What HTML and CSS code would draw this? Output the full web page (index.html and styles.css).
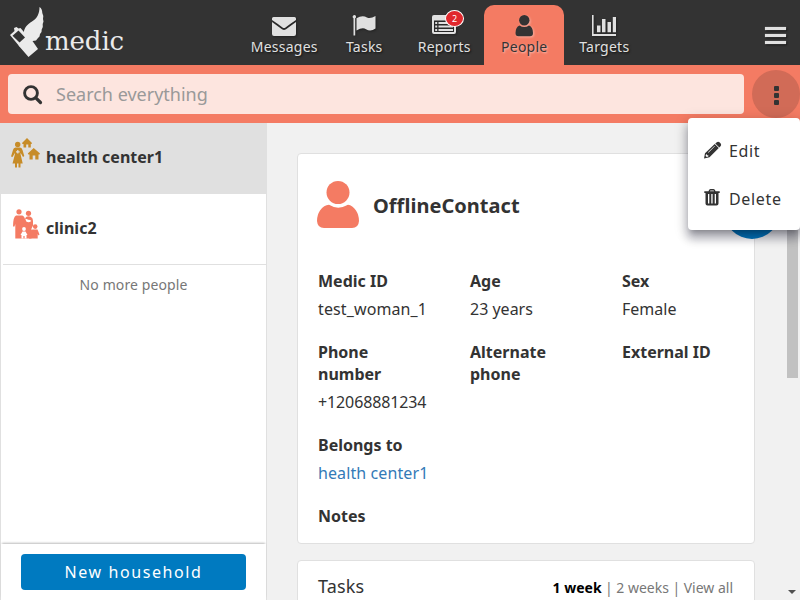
FILE: index.html
```html
<!DOCTYPE html>
<html lang="en">
<head>
<meta charset="utf-8">
<title>Medic</title>
<link rel="stylesheet" href="styles.css">
</head>
<body>
<div class="app">
  <header class="header">
    <div class="logo">
      <svg class="logo-mark" width="34" height="52" viewBox="0 0 34 52" aria-hidden="true">
        <path fill="#ebebeb" d="M29.500 0C31.500 1 32.300 3.500 32.300 6L33.300 9L33 12L33.500 14.500L32.700 17L32.800 20L31.700 22.500L31.500 25L30 27L29.500 29.500L28 31L26 33.500L22.500 34L28 42L18.500 50L8.500 38.500L16 31L13.700 26C14 21 17.500 17 22 14.500C27 11.500 29.500 7 29.500 0Z"/>
        <path fill="#ebebeb" d="M0 28L4.500 24L4 21L6.500 20L8.500 21.500L10.500 21L19 31L9.500 39.500Z"/>
        <path fill="#333" d="M2.500 28.700L8.500 23.500L15 30.500L9.500 35.500Z"/>
      </svg>
      <span class="logo-text">medic</span>
    </div>
    <nav class="tabs">
      <a class="tab">
        <svg width="24" height="24" viewBox="0 0 24 24"><path d="M1.500 2H22.500Q24 2 24 3.500V5Q18 9 13.500 12.400Q12 13.500 10.500 12.400Q6 9 0 5V3.500Q0 2 1.500 2ZM0 7L10 14.200Q12 15.800 14 14.200L24 7V19Q24 21 22 21H2Q0 21 0 19Z"/></svg>
        <span>Messages</span>
      </a>
      <a class="tab">
        <svg width="24" height="24" viewBox="0 0 24 24"><path d="M2.300 0A1.800 1.800 0 0 1 3.200 3.300V20.500H1.500V3.300A1.800 1.800 0 0 1 2.300 0ZM4.500 3.200Q10.500-.5 15 2.500Q18.500 4 23.500 1V13.500Q18.500 17 14 14.200Q10.500 12 4.500 15.500Z"/></svg>
        <span>Tasks</span>
      </a>
      <a class="tab">
        <svg width="24" height="24" viewBox="0 0 24 24"><path fill-rule="evenodd" d="M2 0H22Q24 0 24 2V17Q24 19 22 19H2Q0 19 0 17V2Q0 0 2 0ZM2 5.500V17H22V5.500ZM3.200 7H5.200V9H3.200ZM6.500 7H21V9H6.500ZM3.200 10.500H5.200V12.500H3.200ZM6.500 10.500H21V12.500H6.500ZM3.200 14H5.200V16H3.200ZM6.500 14H21V16H6.500Z"/></svg>
        <span>Reports</span>
        <b class="badge">2</b>
      </a>
      <a class="tab tab-active">
        <svg width="24" height="24" viewBox="0 0 24 24"><circle cx="12.300" cy="5.200" r="5.200"/><path d="M7.500 10.500Q12.300 13.500 17 10.500Q21 12 21 18Q21 21.300 18 21.300H6.500Q3.500 21.300 3.500 18Q3.500 12 7.500 10.500Z"/></svg>
        <span>People</span>
      </a>
      <a class="tab">
        <svg width="24" height="24" viewBox="0 0 24 24"><path d="M0 0H1.600V19H24V21H0ZM5 10.500H8.500V17.200H5ZM10 4H13.500V17.200H10ZM15.500 7H19V17.200H15.500ZM20.800 2H24V17.200H20.800Z"/></svg>
        <span>Targets</span>
      </a>
    </nav>
    <div class="hamburger"><i></i><i></i><i></i></div>
  </header>

  <div class="toolbar">
    <div class="search">
      <svg width="20" height="20" viewBox="0 0 20 20" aria-hidden="true"><circle cx="8" cy="8" r="6.400" fill="none" stroke="#333" stroke-width="2.900"/><path d="M12.800 12.800L17.500 17.500" stroke="#333" stroke-width="3.200" stroke-linecap="round"/></svg>
      <span>Search everything</span>
    </div>
    <div class="more"><i></i><i></i><i></i></div>
  </div>

  <div class="main">
    <aside class="sidebar">
      <div class="item item-selected">
        <svg width="30" height="30" viewBox="0 0 30 30" fill="#c78c28">
          <circle cx="6.700" cy="6.500" r="2.700"/>
          <path fill-rule="evenodd" d="M4.500 9.500H9Q11 9.500 11.500 12L13.300 18L12 19L9.700 15L9.500 16L11.700 25.500H9.500V29.500H7.500V25.500H6V29.500H4V25.500H1.500L4 16V15L1.500 19L0 18.500L2 12Q2.500 9.500 4.500 9.500ZM6.200 12V13.200H5V14.400H6.200V15.600H7.400V14.400H8.600V13.200H7.400V12Z"/>
          <path d="M11 5L16 0L21 5L20.500 6H19.800V9.500H17.300V6.500H15.200V9.500H12.500V6H11.500ZM16.800 15.500L22.700 10L29 15.500L28.500 16.500H27.500V21.500H24.300V17.500H21.700V21.500H18.500V16.500H17.400Z"/>
        </svg>
        <span>health center1</span>
      </div>
      <div class="item">
        <svg width="30" height="30" viewBox="0 0 30 30" fill="#f47b63">
          <circle cx="8" cy="2.800" r="2.600"/><circle cx="17.500" cy="4.300" r="2.600"/>
          <path d="M5 6.500H11Q13 6.500 14 10L15 8Q17.500 6.700 20 8Q22 9 22 12V16.500L20.500 19.500V29.500H4.300V15L3.500 17.500H2Q2 8 5 6.500Z"/>
          <circle cx="24.200" cy="17.600" r="2.300"/><path d="M21.500 20.500H26.500L28.500 25.500L27.500 26.500L26.700 25V29.500H18V22L19.500 21.500Z"/>
          <path fill="#fff" d="M14.300 10.300Q16 9.500 17 10.800Q19 10.500 20.300 12Q18 14 15.500 12.800Z"/>
          <circle cx="13" cy="20" r="1.900" fill="#fff"/><path fill="#fff" d="M11.500 22.500H14.500L16.500 26H15.500V29.500H13.600V27H12.400V29.500H10.500V26H9.500Z"/>
        </svg>
        <span>clinic2</span>
      </div>
      <p class="end">No more people</p>
      <div class="actions"><button class="button">New household</button></div>
    </aside>

    <section class="content">
      <article class="card">
        <div class="card-head">
          <svg width="42" height="48" viewBox="0 0 42 48" fill="#f47b63" aria-hidden="true"><circle cx="21" cy="11.500" r="11.500"/><path d="M12 23.800Q21 29.500 31 23.800Q35.500 24.500 39 29.500Q42 34 42 40Q41.500 47 35 47H7Q.5 47 0 40Q0 34 3 29.500Q7 24 12 23.800Z"/></svg>
          <h2>OfflineContact</h2>
        </div>
        <dl class="fields">
          <div><dt>Medic ID</dt><dd class="loose">test_woman_1</dd></div>
          <div><dt>Age</dt><dd>23 years</dd></div>
          <div><dt>Sex</dt><dd>Female</dd></div>
          <div><dt>Phone number</dt><dd class="tight">+12068881234</dd></div>
          <div><dt>Alternate phone</dt></div>
          <div><dt>External ID</dt></div>
          <div class="wide"><dt>Belongs to</dt><dd><a>health center1</a></dd></div>
          <div class="wide"><dt>Notes</dt></div>
        </dl>
      </article>
      <article class="card card-tasks">
        <h3>Tasks</h3>
        <div class="filters"><b>1 week</b><i>|</i><span>2 weeks</span><i>|</i><span>View all</span></div>
      </article>
      <div class="fab"></div>
      <div class="scroll-thumb"></div>
      <div class="scroll-arrow"></div>
    </section>
  </div>

  <div class="menu">
    <div class="menu-item">
      <svg width="18" height="18" viewBox="0 0 18 18"><path fill-rule="evenodd" d="M12.500 1.500Q14 0 15.500 1.200L16.700 2.500Q17.800 4 16.500 5.200L15.300 6.400L11.300 2.500ZM10.700 3.100L14.800 7L5.500 16.200L0 17.500L1 12.200ZM2 13.500L1.600 15L2.900 16L4.300 15.600V14.200H3V13.200ZM10.500 4.900L4 11.300L4.400 11.700L10.900 5.300Z"/></svg>
      <span>Edit</span>
    </div>
    <div class="menu-item">
      <svg width="18" height="18" viewBox="0 0 18 18"><path fill-rule="evenodd" d="M4.800 1.500Q5.100 0 6.500 0H9.500Q10.900 0 11.200 1.500L11.500 2.300H15.700V4H14.500V14.500Q14.500 16.500 12.500 16.500H3.500Q1.500 16.500 1.500 14.500V4H.3V2.300H4.500ZM6.300 1.400L6 2.300H10L9.700 1.400ZM4 5V14.500H5.300V5ZM7.300 5V14.500H8.600V5ZM10.700 5V14.500H12V5Z"/></svg>
      <span>Delete</span>
    </div>
  </div>
</div>
</body>
</html>
```
FILE: styles.css
```css
* { box-sizing: border-box; }

body {
  margin: 0;
  overflow: hidden;
  font-family: "Noto Sans", sans-serif;
  font-size: 16px;
  line-height: 22px;
  color: #333;
}

.app {
  position: relative;
  display: flex;
  flex-direction: column;
  width: 800px;
  height: 600px;
  overflow: hidden;
  background: #f1f1f1;
}

.header {
  display: flex;
  height: 65px;
  flex: none;
  background: #333;
}

.logo {
  display: flex;
  width: 244px;
  padding: 7px 0 0 10px;
}

.logo-text {
  margin: 19px 0 0 1px;
  font-family: "DejaVu Serif", serif;
  font-size: 26px;
  line-height: 30px;
  letter-spacing: -0.1px;
  color: #ebebeb;
}

.tabs { display: flex; padding-top: 5px; }

.tab {
  position: relative;
  display: flex;
  flex-direction: column;
  align-items: center;
  width: 80px;
  height: 60px;
  padding-top: 10px;
  font-size: 14px;
  line-height: 18px;
  letter-spacing: 0.25px;
  color: #e0e0e0;
  fill: #e0e0e0;
  text-shadow: 1px 1px 2px #111;
}

.tab svg { filter: drop-shadow(1px 1px 1px #1118); }
.tab span { margin: -1px 0 0 0.5px; }

.tab-active {
  border-radius: 10px 10px 0 0;
  background: #f47b63;
  color: #333;
  fill: #333;
  text-shadow: 1px 1px 2px #fff8;
}

.tab-active svg { filter: drop-shadow(1px 1px 1px #fff6); }

.badge {
  position: absolute;
  top: 5px;
  left: 41px;
  width: 19px;
  height: 17px;
  border: 1px solid #fff;
  border-radius: 50%;
  background: #e1282d;
  font-size: 9px;
  font-weight: 400;
  line-height: 16px;
  letter-spacing: 0;
  text-align: center;
  text-shadow: none;
  color: #fff;
}

.hamburger {
  display: flex;
  flex-direction: column;
  gap: 4px;
  margin: 27px 14px 0 auto;
}

.hamburger i {
  width: 21px;
  height: 3px;
  background: #e0e0e0;
  box-shadow: 0 0 1px #e0e0e0, 1px 1px 2px #111;
}

.toolbar {
  display: flex;
  flex: none;
  height: 58px;
  padding: 9px 0 0 8px;
  background: #f47b63;
}

.search {
  display: flex;
  align-items: center;
  gap: 13px;
  width: 736px;
  height: 40px;
  padding-left: 15px;
  border-radius: 4px;
  background: #fde5df;
  font-size: 18px;
  color: #999;
}

.search svg { margin-top: 1px; }

.more {
  display: flex;
  flex-direction: column;
  align-items: center;
  justify-content: center;
  gap: 2px;
  width: 48px;
  height: 48px;
  margin: -4px 0 0 8px;
  padding-top: 3px;
  border-radius: 50%;
  background: #d16b57;
}

.more i {
  width: 5px;
  height: 5px;
  border-radius: 1px;
  background: #333;
}

.main { display: flex; flex: 1; min-height: 0; }

.sidebar {
  display: flex;
  flex-direction: column;
  flex: none;
  width: 267px;
  border: solid #e0e0e0;
  border-width: 0 1px;
  background: #fff;
}

.item {
  display: flex;
  flex: none;
  height: 71px;
  margin-left: 2px;
  padding: 15px 0 0 8px;
  border-bottom: 1px solid #e0e0e0;
  font-weight: 700;
}

.item-selected {
  margin-left: 0;
  padding-left: 10px;
  background: #e0e0e0;
}

.item span { margin: 8px 0 0 5px; letter-spacing: 0.03px; }

.end {
  margin: 9px 0 0;
  font-size: 14px;
  letter-spacing: 0.1px;
  text-align: center;
  color: #777;
}

.actions {
  height: 56px;
  margin-top: auto;
  padding: 10px 20px;
  box-shadow: 0 -2px 2px -1px #0004;
}

.button {
  width: 225px;
  height: 36px;
  padding: 0;
  border: 0;
  border-radius: 4px;
  background: #007ac0;
  font: 16px/36px "Noto Sans", sans-serif;
  letter-spacing: 1.6px;
  color: #fff;
}

.content {
  position: relative;
  flex: 1;
  min-width: 0;
  padding: 30px 45px 0 30px;
}

.card {
  height: 391px;
  margin-bottom: 16px;
  padding: 0 20px;
  border: 1px solid #e0e0e0;
  border-radius: 4px;
  background: #fff;
}

.card-head {
  display: flex;
  align-items: center;
  height: 104px;
  margin-left: -1px;
}

.card-head svg { margin-top: -2px; }

h2 { margin: 0 0 0 14px; font-size: 20px; letter-spacing: 0.03px; }

.fields {
  display: grid;
  grid-template-columns: 152px 152px 112px;
  row-gap: 21px;
  margin: 12px 0 0;
}

.fields .wide { grid-column: 1 / -1; }
dt { width: 112px; font-weight: 700; }
dd { margin: 6px 0 0; }
dd a { color: #337ab7; letter-spacing: 0.1px; }
.loose { letter-spacing: 0.12px; }
.tight { letter-spacing: -0.12px; }

.card-tasks {
  display: flex;
  justify-content: space-between;
  align-items: flex-start;
  padding-top: 14px;
}

h3 { margin: 0; font-size: 18px; font-weight: 400; letter-spacing: 0.15px; }

.filters {
  display: flex;
  gap: 3.5px;
  padding: 2px 1px 0 0;
  font-size: 14px;
  color: #777;
}

.filters i { font-style: normal; }
.filters b { color: #000; }

.fab {
  position: absolute;
  top: 60px;
  left: 457px;
  width: 56px;
  height: 56px;
  border-radius: 50%;
  background: #007ac0;
}

.scroll-thumb {
  position: absolute;
  top: 17px;
  right: 2px;
  width: 11px;
  height: 238px;
  background: #c1c1c1;
}

.scroll-arrow {
  position: absolute;
  top: 467px;
  right: 4px;
  border: solid transparent;
  border-width: 4px 4px 0;
  border-top-color: #505050;
}

.menu {
  position: absolute;
  top: 118px;
  left: 688px;
  width: 112px;
  height: 112px;
  padding: 8px 16px;
  border-radius: 4px;
  background: #fff;
  box-shadow: 0 5px 5px -3px #0003, 0 8px 10px 1px #0024, 0 3px 14px 2px #0002;
}

.menu-item {
  display: flex;
  align-items: center;
  gap: 7px;
  height: 48px;
  fill: #333;
  letter-spacing: 0.65px;
}

.menu-item span { margin-top: 2px; }
```
